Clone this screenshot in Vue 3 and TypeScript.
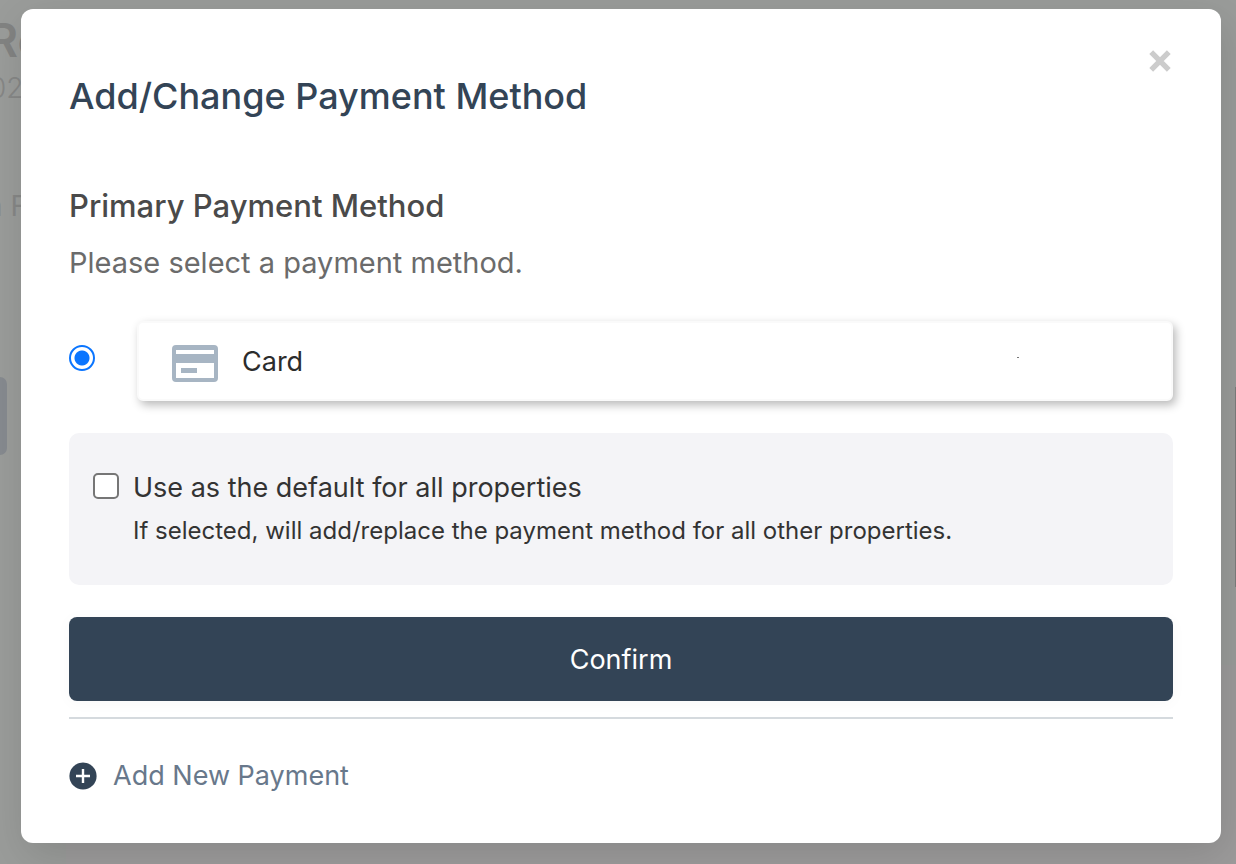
<script setup lang="ts">
import { ref } from 'vue'

const method = ref('card')
const useAsDefault = ref(false)
const methods = [{ id: 'card', label: 'Card' }]
</script>

<template>
  <div class="screen">
    <div class="page" aria-hidden="true">
      <div class="page-title">Re</div>
      <div class="page-date">02</div>
      <div class="page-label">n F</div>
      <div class="page-row">
        <div class="page-button"></div>
        <div class="page-edge"></div>
      </div>
      <div class="page-section"></div>
    </div>

    <div class="overlay">
      <form class="modal" role="dialog" aria-labelledby="dialog-title" @submit.prevent>
        <button class="close" type="button" aria-label="Close">
          <svg viewBox="0 0 22 22" width="22" height="22">
            <path d="M2.2 2.2 19.8 19.8M19.8 2.2 2.2 19.8" stroke="#cccccc" stroke-width="5.4" fill="none" />
          </svg>
        </button>

        <h1 id="dialog-title">Add/Change Payment Method</h1>
        <h2>Primary Payment Method</h2>
        <p class="hint">Please select a payment method.</p>

        <div v-for="m in methods" :key="m.id" class="method">
          <input :id="m.id" v-model="method" class="radio" type="radio" name="method" :value="m.id" />
          <label class="card" :for="m.id">
            <svg class="card-icon" viewBox="0 0 46 37" width="46" height="37">
              <path
                fill="#a7b5c3"
                fill-rule="evenodd"
                d="M4 0H42a4 4 0 0 1 4 4V33a4 4 0 0 1-4 4H4a4 4 0 0 1-4-4V4a4 4 0 0 1 4-4ZM4 5V9H42V5ZM4 18V33H42V18ZM9 23H25V28H9Z"
              />
            </svg>
            <span>{{ m.label }}</span>
            <i class="dot"></i>
          </label>
        </div>

        <div class="default-panel">
          <input id="use-default" v-model="useAsDefault" class="checkbox" type="checkbox" aria-describedby="default-note" />
          <div>
            <label class="default-label" for="use-default">Use as the default for all properties</label>
            <p id="default-note" class="default-note">
              If selected, will add/replace the payment method for all other properties.
            </p>
          </div>
        </div>

        <button class="confirm" type="submit">Confirm</button>
        <hr />
        <button class="add" type="button">
          <svg viewBox="0 0 28 28" width="28" height="28">
            <circle cx="14" cy="14" r="13.6" fill="#334456" />
            <path d="M14 7V21M7 14H21" stroke="#ffffff" stroke-width="2.4" />
          </svg>
          <span>Add New Payment</span>
        </button>
      </form>
    </div>
  </div>
</template>

<style>
body {
  margin: 0;
  background: #9a9c9a;
}
</style>

<style scoped>
.screen {
  position: relative;
  min-height: 100vh;
  overflow: hidden;
  font-family: Inter, 'Liberation Sans', sans-serif;
  background: #9a9c9a;
}

.page {
  position: absolute;
  inset: 0;
  display: flex;
  flex-direction: column;
  overflow: hidden;
  color: #868786;
}

.page-title {
  margin: 12px 0 0 -12px;
  font-size: 46px;
  line-height: 56px;
  font-weight: 600;
  color: #828382;
}

.page-date {
  margin: 2px 0 0 -11px;
  font-size: 28px;
  line-height: 36px;
  font-weight: 300;
}

.page-label {
  margin: 82px 0 0 -14px;
  font-size: 28px;
  line-height: 36px;
}

.page-row {
  display: flex;
  justify-content: space-between;
  margin-top: 153px;
}

.page-button {
  width: 7px;
  height: 78px;
  border-radius: 0 8px 8px 0;
  background: #868a8f;
}

.page-edge {
  width: 1px;
  height: 200px;
  margin-top: 10px;
  background: #7c7d7c;
}

.page-section {
  flex: 1;
  margin: 78px 0 0 66px;
  background: #9c9b9b;
}

.overlay {
  position: relative;
  padding: 9px 15px 21px 21px;
}

.modal {
  position: relative;
  padding: 63px 48px 48px;
  border-radius: 12px;
  background: #ffffff;
  box-shadow: 4px 12px 40px rgba(0, 0, 0, 0.13);
}

.close {
  position: absolute;
  top: 36px;
  right: 45px;
  display: flex;
  padding: 5px;
  border: 0;
  background: none;
}

h1 {
  margin: 0 0 66px;
  font-size: 36px;
  line-height: 48px;
  font-weight: 500;
  color: #334456;
}

h2 {
  margin: 0 0 19px;
  font-size: 31px;
  line-height: 40px;
  font-weight: 500;
  color: #4a4a4a;
}

.hint {
  margin: 0 0 40px;
  font-size: 29px;
  line-height: 36px;
  color: #6b6b6b;
}

.method {
  display: flex;
  align-items: flex-start;
  gap: 42px;
}

.radio {
  appearance: none;
  flex: none;
  box-sizing: border-box;
  width: 26px;
  height: 26px;
  margin: 24px 0 0;
  border: 2px solid #767676;
  border-radius: 50%;
  background: #ffffff;
}

.radio:checked {
  border-color: #0a75ff;
  background: radial-gradient(circle, #0a75ff 7px, #ffffff 8px);
}

.card {
  display: flex;
  flex: 1;
  align-items: center;
  gap: 24px;
  box-sizing: border-box;
  min-height: 80px;
  padding: 2px 152px 0 33px;
  border: 2px solid #fafafa;
  border-radius: 6px;
  background: #ffffff;
  box-shadow: 3px 4px 10px rgba(0, 0, 0, 0.28);
  font-size: 27px;
  line-height: 38px;
  color: #2c2c2c;
}

.card-icon {
  margin-top: 2px;
}

.dot {
  width: 2px;
  height: 1px;
  margin: -10px 0 0 auto;
  background: #777777;
}

.default-panel {
  display: flex;
  align-items: flex-start;
  gap: 14px;
  margin: 32px 0;
  padding: 36px 24px 38px;
  border-radius: 10px;
  background: #f4f4f7;
  color: #333333;
}

.checkbox {
  appearance: none;
  flex: none;
  box-sizing: border-box;
  width: 26px;
  height: 26px;
  margin: 4px 0 0;
  border: 2px solid #767676;
  border-radius: 5px;
  background: #ffffff;
}

.checkbox:checked {
  border-color: #0a75ff;
  background: #0a75ff;
}

.default-label {
  display: block;
  font-size: 27px;
  line-height: 38px;
}

.default-note {
  margin: 8px 0 0;
  font-size: 24px;
  line-height: 32px;
}

.confirm {
  display: block;
  width: 100%;
  padding: 24px 24px 22px;
  border: 0;
  border-radius: 8px;
  background: #334456;
  color: #ffffff;
  font-family: inherit;
  font-size: 27px;
  line-height: 38px;
  box-shadow: 0 2px 16px rgba(0, 0, 0, 0.03);
}

hr {
  height: 2px;
  margin: 16px 0 38px;
  border: 0;
  background: #d5dade;
}

.add {
  display: flex;
  align-items: center;
  gap: 16px;
  padding: 0;
  border: 0;
  background: none;
  color: #68788b;
  font-family: inherit;
  font-size: 27px;
  line-height: 38px;
}
</style>
